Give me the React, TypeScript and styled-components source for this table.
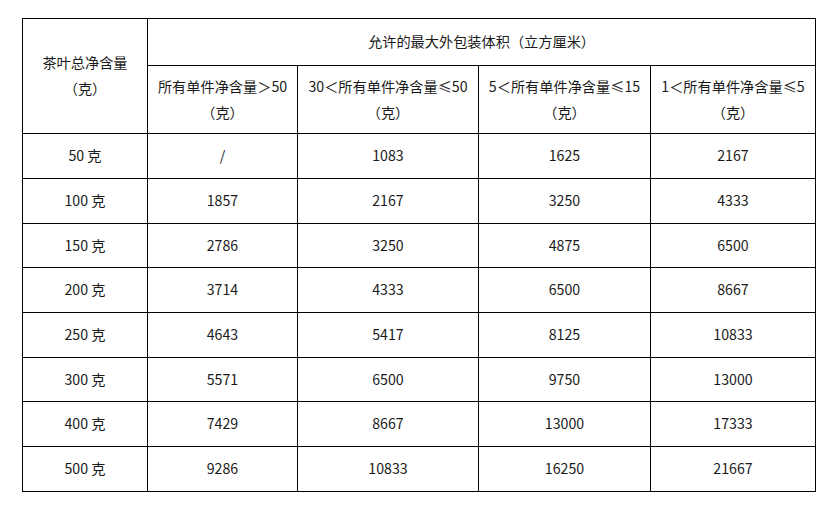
import React from "react";
import styled, { createGlobalStyle } from "styled-components";

const Global = createGlobalStyle`
  html, body { margin: 0; padding: 0; background: #fff; }
  body { font-family: "Noto Sans CJK SC", "Noto Sans", sans-serif; color: #1a1a1a; }
`;

const Page = styled.div`
  padding: 18px 0 0 22px;
`;

const Table = styled.table`
  border-collapse: collapse;
  table-layout: fixed;
  width: 793px;
  font-size: 14.2px;
`;

const Cell = styled.td<{ $h?: number }>`
  border: 1.5px solid #000;
  text-align: center;
  vertical-align: middle;
  padding: 0 0 2px;
  line-height: 26px;
  height: ${(p) => (p.$h ? `${p.$h}px` : "auto")};
  white-space: nowrap;
`;

const Line = styled.div`
  line-height: 26px;
`;

const rows: [string, string, string, string, string][] = [
  ["50 克", "/", "1083", "1625", "2167"],
  ["100 克", "1857", "2167", "3250", "4333"],
  ["150 克", "2786", "3250", "4875", "6500"],
  ["200 克", "3714", "4333", "6500", "8667"],
  ["250 克", "4643", "5417", "8125", "10833"],
  ["300 克", "5571", "6500", "9750", "13000"],
  ["400 克", "7429", "8667", "13000", "17333"],
  ["500 克", "9286", "10833", "16250", "21667"],
];

const heads = [
  "所有单件净含量＞50",
  "30＜所有单件净含量≤50",
  "5＜所有单件净含量≤15",
  "1＜所有单件净含量≤5",
];

export default function App() {
  return (
    <Page>
      <Global />
      <Table>
        <colgroup>
          <col style={{ width: 125 }} />
          <col style={{ width: 150 }} />
          <col style={{ width: 181 }} />
          <col style={{ width: 172 }} />
          <col style={{ width: 165 }} />
        </colgroup>
        <tbody>
          <tr>
            <Cell rowSpan={2}>
              <Line>茶叶总净含量</Line>
              <Line>（克）</Line>
            </Cell>
            <Cell colSpan={4} $h={44}>允许的最大外包装体积（立方厘米）</Cell>
          </tr>
          <tr>
            {heads.map((h) => (
              <Cell key={h} $h={65}>
                <Line>{h}</Line>
                <Line>（克）</Line>
              </Cell>
            ))}
          </tr>
          {rows.map((r, i) => (
            <tr key={i}>
              {r.map((v, j) => (
                <Cell key={j} $h={i % 3 === 2 ? 41 : 42}>
                  {v}
                </Cell>
              ))}
            </tr>
          ))}
        </tbody>
      </Table>
    </Page>
  );
}
